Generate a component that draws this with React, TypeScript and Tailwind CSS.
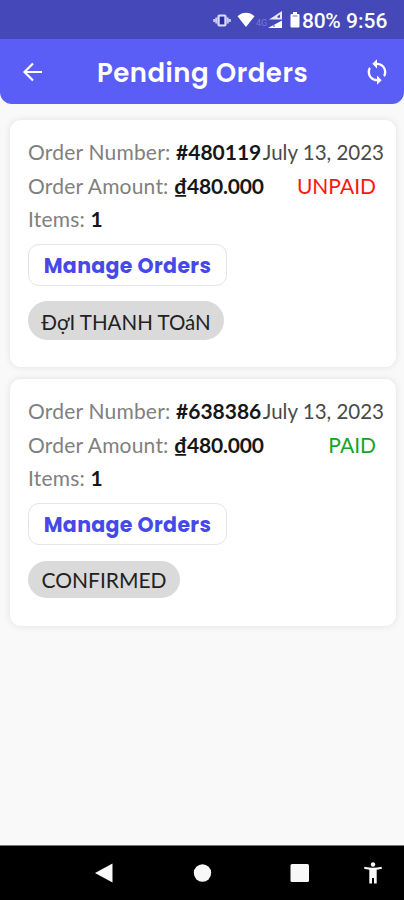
import React from "react";

type Order = {
  number: string;
  date: string;
  amount: string;
  items: number;
  paid: boolean;
  status: string;
};

const orders: Order[] = [
  { number: "#480119", date: "July 13, 2023", amount: "₫480.000", items: 1, paid: false, status: "ĐợI THANH TOáN" },
  { number: "#638386", date: "July 13, 2023", amount: "₫480.000", items: 1, paid: true, status: "CONFIRMED" },
];

function StatusBar() {
  return (
    <div className="flex h-[39px] items-center justify-end bg-[#4548b8] pr-4 font-['Roboto',sans-serif] text-white">
      <svg className="h-5 w-[18px]" viewBox="0 0 18 20">
        <path d="M1.200 9v3M3.300 7.500v6M16.800 9v3M14.700 7.500v6" stroke="#c9caf4" strokeWidth="2" />
        <rect x="5.500" y="5.500" width="7" height="10" rx="1" fill="none" stroke="#dcdcfa" strokeWidth="2.200" />
        <rect x="7" y="7" width="4" height="7" fill="#2c2ea8" />
      </svg>
      <svg className="ml-[6px] h-5 w-[18px]" viewBox="0 0 18 20">
        <path d="M0.500 6.200C5.500 1.600 12.500 1.600 17.500 6.200L9 17z" fill="#fff" />
      </svg>
      <span className="mt-2 ml-px w-3 text-[9px] leading-none text-[#7779d4]">4G</span>
      <svg className="h-5 w-[15px]" viewBox="0 0 15 20">
        <path d="M1 9.500 14 1v8.500z" fill="#e6e6fc" />
        <path d="M9.500 7.800V6.200L12 4.500v3.300z" fill="#4548b8" />
        <path d="M0 18 14 10.500V18z" fill="#fff" />
        <path d="M5 16h2" stroke="#4548b8" />
      </svg>
      <svg className="ml-[7px] h-5 w-[10px]" viewBox="0 0 10 20">
        <path d="M3 2h4v2h1.400q1.100 0 1.100 1.100v11.300q0 1.100-1.100 1.100H1.600Q.5 17.500.5 16.400V5.100Q.5 4 1.600 4H3z" fill="#fff" />
        <path d="M2.500 6h5" stroke="#7779c8" />
      </svg>
      <span className="mt-[4px] ml-[2px] w-[40px] text-[21px] font-medium tracking-[-0.3px]">80%</span>
      <span className="mt-[4px] ml-[4px] w-[42px] text-[21px] font-medium">9:56</span>
    </div>
  );
}

function Header() {
  return (
    <header className="flex h-[65px] items-center rounded-b-[12px] bg-[#5a5df6] pr-[13px] pl-[21px] text-white">
      <svg className="h-6 w-6" viewBox="0 0 24 24" fill="none" stroke="currentColor" strokeWidth="2.200">
        <path d="M21 12H4M12 3.500 3.500 12 12 20.500" />
      </svg>
      <h1 className="mt-[3px] flex-1 pr-[3px] text-center font-['Poppins','Inter',sans-serif] text-[26px] font-semibold tracking-[0.5px] whitespace-nowrap">Pending Orders</h1>
      <svg className="h-7 w-7" viewBox="0 0 24 24" fill="currentColor">
        <path d="M12 4V1L8 5l4 4V6c3.310 0 6 2.690 6 6 0 1.010-.25 1.970-.7 2.800l1.460 1.460C19.540 15.030 20 13.570 20 12c0-4.420-3.580-8-8-8zm0 14c-3.310 0-6-2.690-6-6 0-1.010.25-1.970.7-2.800L5.240 7.740C4.460 8.970 4 10.430 4 12c0 4.420 3.580 8 8 8v3l4-4-4-4v3z" />
      </svg>
    </header>
  );
}

function Field({ label, value, tight = false }: { label: string; value: string | number; tight?: boolean }) {
  return (
    <span className="tracking-[0.200px]">
      {label} <b className={`text-[#161616] ${tight ? "tracking-[-0.200px]" : "tracking-[0px]"}`}>{value}</b>
    </span>
  );
}

function OrderCard({ order }: { order: Order }) {
  return (
    <article className="h-[247px] rounded-[11px] bg-white pt-[14px] pr-[12px] pl-[18px] font-['Lato',sans-serif] text-[21px] text-[#808080] shadow-[0_0_7px_rgba(0,0,0,0.1)]">
      <div className="flex h-[34px] items-baseline justify-between leading-[35px] whitespace-nowrap">
        <Field label="Order Number:" value={order.number} />
        <span className="text-[20.500px] text-[#4a4a4a]">{order.date}</span>
      </div>
      <div className="flex h-[35px] items-center justify-between pr-2 leading-[35px] whitespace-nowrap">
        <Field label="Order Amount:" value={order.amount} tight />
        <span className={order.paid ? "text-[#16a329]" : "text-[#fb1812]"}>{order.paid ? "PAID" : "UNPAID"}</span>
      </div>
      <div className="h-[32px] leading-[32px]"><Field label="Items:" value={order.items} /></div>
      <button className="mt-[9px] flex h-[42px] w-[199px] items-center justify-center rounded-[11px] border border-[#e5e5e5] pt-[2px] font-['Poppins','Inter',sans-serif] text-[20.500px] font-bold tracking-[0.350px] whitespace-nowrap text-[#4649e7]">
        Manage Orders
      </button>
      <div className={`flex items-center justify-center rounded-full bg-[#dadada] whitespace-nowrap text-[#222] ${order.paid ? "mt-[16px] h-[37px] w-[152px] pt-px text-[21px]" : "mt-[15px] h-[39px] w-[196px] pt-[3px] text-[20.500px]"}`}>
        {order.status}
      </div>
    </article>
  );
}

function NavigationBar() {
  return (
    <nav className="h-[55px] border-t border-[#777] bg-black">
      <svg className="h-[54px] w-full" viewBox="0 0 404 54" fill="#f8f8f8">
        <path d="M95 27 112.500 17.500v19z" />
        <circle cx="202.500" cy="27" r="8.700" />
        <rect x="290.500" y="18" width="18.500" height="18" rx="1.500" />
        <circle cx="373" cy="18.500" r="2.200" />
        <path d="M364.500 20.700q8.500 2.200 17 0l.5 2q-2.500.7-5.300 1v13.800h-2.700v-5.500h-2v5.500h-2.700V23.700q-2.800-.3-5.300-1z" />
      </svg>
    </nav>
  );
}

export default function App() {
  return (
    <div className="flex h-[900px] w-[404px] flex-col overflow-hidden bg-[#f9f9f9]">
      <StatusBar />
      <Header />
      <main className="flex flex-1 flex-col gap-[12px] pt-[16px] pr-[8px] pl-[10px]">
        {orders.map((order) => <OrderCard key={order.number} order={order} />)}
      </main>
      <NavigationBar />
    </div>
  );
}
